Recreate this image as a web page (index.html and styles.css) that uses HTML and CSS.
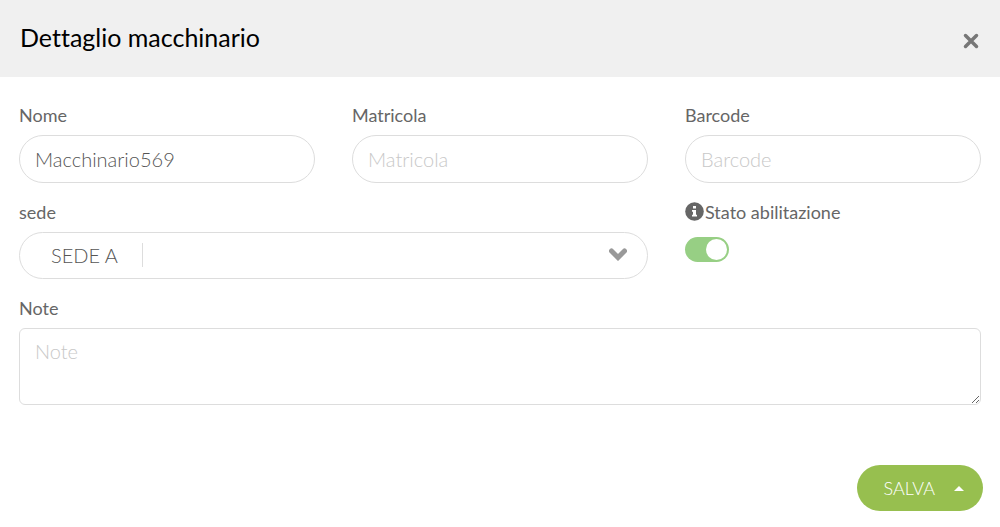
FILE: index.html
```html
<!DOCTYPE html>
<html lang="it">
<head>
<meta charset="utf-8">
<meta name="viewport" content="width=device-width, initial-scale=1">
<title>Dettaglio macchinario</title>
<link rel="stylesheet" href="styles.css">
</head>
<body>

<header class="modal-header">
    <h1>Dettaglio macchinario</h1>
    <button type="button" class="close" aria-label="Chiudi">
        <svg width="16" height="16" viewBox="0 0 16 16"><path d="M2.5 2.5l11 11M13.5 2.5l-11 11"/></svg>
    </button>
</header>

<form class="modal-body">
    <div class="form-grid">
        <div class="field">
            <label for="nome">Nome</label>
            <input type="text" id="nome" name="nome" class="control" placeholder="Nome" value="Macchinario569">
        </div>

        <div class="field">
            <label for="matricola">Matricola</label>
            <input type="text" id="matricola" name="matricola" class="control" placeholder="Matricola">
        </div>

        <div class="field">
            <label for="barcode">Barcode</label>
            <input type="text" id="barcode" name="barcode" class="control" placeholder="Barcode">
        </div>

        <div class="field field-sede">
            <label for="sede">sede</label>
            <div class="select-wrap">
                <select id="sede" name="sede" class="control">
                    <option>SEDE A</option>
                </select>
                <svg class="chevron" width="18" height="13" viewBox="0 0 18 13"><path d="M2.5 3L9 9.500 15.500 3"/></svg>
            </div>
        </div>

        <div class="field">
            <label for="stato" class="label-info">
                <svg width="20" height="20" viewBox="0 0 20 20">
                    <circle cx="9.500" cy="9.500" r="9.300"/>
                    <path d="M8 4h3v2.500h-3zM7 8h4v4.800h1v1.700h-5v-1.700h1v-3.100h-1z"/>
                </svg>
                <span>Stato abilitazione</span>
            </label>
            <input type="checkbox" id="stato" name="stato" class="switch" checked>
        </div>

        <div class="field field-note">
            <label for="note">Note</label>
            <textarea id="note" name="note" class="control" rows="2" placeholder="Note"></textarea>
        </div>
    </div>

    <div class="modal-footer">
        <button type="submit" class="btn-save">
            SALVA
            <svg width="10" height="5" viewBox="0 0 10 5"><path d="M0 5l5-5 5 5z"/></svg>
        </button>
    </div>
</form>

</body>
</html>
```

FILE: styles.css
```css
* {
    box-sizing: border-box;
}

body {
    margin: 0;
    background: #fff;
    color: #666;
    font-family: Lato, sans-serif;
    font-size: 18px;
    line-height: 24px;
}

/* Header */
.modal-header {
    display: flex;
    align-items: center;
    justify-content: space-between;
    padding: 21px 21px 24px 20px;
    background: #f0f0f0;
}

.modal-header h1 {
    margin: 0;
    color: #000;
    font-size: 25px;
    font-weight: 400;
    font-variant-ligatures: none;
    line-height: 32px;
}

.close {
    display: flex;
    margin-top: 7px;
    padding: 0;
    border: none;
    background: none;
    cursor: pointer;
}

.close path {
    fill: none;
    stroke: #777;
    stroke-width: 3.5;
    stroke-linecap: round;
}

/* Form */
.modal-body {
    padding: 26px 19px 16px;
}

.form-grid {
    display: grid;
    grid-template-columns: repeat(3, minmax(0, 1fr));
    gap: 17px 37px;
}

.field-sede {
    grid-column: span 2;
}

.field-note {
    grid-column: span 3;
}

.field label {
    display: block;
    margin-bottom: 8px;
}

.control {
    display: block;
    width: 100%;
    height: 48px;
    padding: 0 15px;
    border: 1px solid #ddd;
    border-radius: 24px;
    background: #fff;
    color: #555;
    font-family: inherit;
    font-size: 20px;
    font-weight: 300;
}

.control::placeholder {
    color: #c8c8c8;
    opacity: 1;
}

.select-wrap {
    position: relative;
}

select.control {
    height: 47px;
    padding: 0 50px 2px 31px;
    appearance: none;
    /* divider after the selected value */
    background: linear-gradient(#ddd, #ddd) 122px 10px / 1px 24px no-repeat #fff;
}

.chevron {
    position: absolute;
    top: 16px;
    right: 21px;
    pointer-events: none;
}

.chevron path {
    fill: none;
    stroke: #999;
    stroke-width: 5;
    stroke-linecap: round;
}

textarea.control {
    height: 77px;
    padding: 10px 15px;
    border-radius: 6px;
    line-height: 24px;
    resize: vertical;
}

.field .label-info {
    display: flex;
    align-items: center;
}

.label-info circle {
    fill: #666;
}

.label-info path {
    fill: #fff;
}

.switch {
    display: block;
    width: 44px;
    height: 25px;
    margin: 13px 0 0;
    appearance: none;
    border-radius: 13px;
    background: #ccc;
    cursor: pointer;
}

.switch::before {
    content: "";
    display: block;
    width: 21px;
    height: 21px;
    margin: 2px;
    border-radius: 50%;
    background: #fff;
}

.switch:checked {
    display: flex;
    justify-content: flex-end;
    background: #97cf84;
}

/* Footer */
.modal-footer {
    display: flex;
    justify-content: flex-end;
    margin: 60px -2px 0 0;
}

.btn-save {
    display: flex;
    align-items: center;
    gap: 19px;
    height: 46px;
    padding: 0 19px 0 27px;
    border: none;
    border-radius: 23px;
    background: #97bf4f;
    color: #fff;
    font-family: inherit;
    font-size: 18px;
    font-weight: 300;
    cursor: pointer;
}

.btn-save path {
    fill: #fff;
}
```
